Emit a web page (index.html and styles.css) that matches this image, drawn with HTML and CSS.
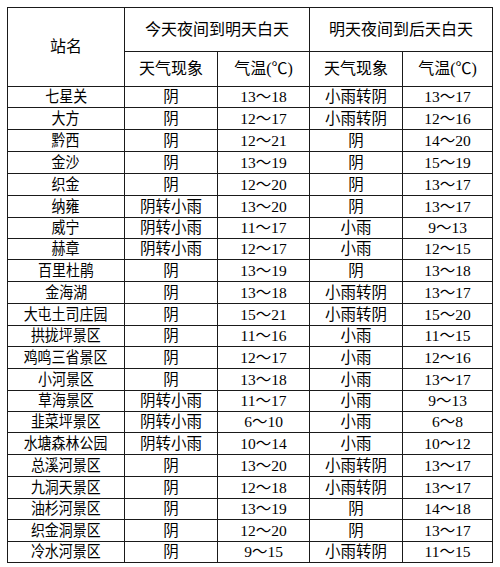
FILE: index.html
```html
<!DOCTYPE html>
<html lang="zh">
<head>
<meta charset="utf-8">
<link rel="stylesheet" href="styles.css">
</head>
<body>
<table class="wx">
  <colgroup>
    <col class="c1"><col class="c2"><col class="c3"><col class="c4"><col class="c5">
  </colgroup>
  <thead>
    <tr class="hr1"><th rowspan="2">站名</th><th colspan="2">今天夜间到明天白天</th><th colspan="2">明天夜间到后天白天</th></tr>
    <tr class="hr2"><th>天气现象</th><th>气温(℃)</th><th>天气现象</th><th>气温(℃)</th></tr>
  </thead>
  <tbody>
    <tr class="s"><td><span class="nm">七星关</span></td><td>阴</td><td>13～18</td><td>小雨转阴</td><td>13～17</td></tr>
    <tr class="l"><td><span class="nm">大方</span></td><td>阴</td><td>12～17</td><td>小雨转阴</td><td>12～16</td></tr>
    <tr class="l"><td><span class="nm">黔西</span></td><td>阴</td><td>12～21</td><td>阴</td><td>14～20</td></tr>
    <tr class="l"><td><span class="nm">金沙</span></td><td>阴</td><td>13～19</td><td>阴</td><td>15～19</td></tr>
    <tr class="l"><td><span class="nm">织金</span></td><td>阴</td><td>12～20</td><td>阴</td><td>13～17</td></tr>
    <tr class="l"><td><span class="nm">纳雍</span></td><td>阴转小雨</td><td>13～20</td><td>阴</td><td>13～17</td></tr>
    <tr class="s"><td><span class="nm">威宁</span></td><td>阴转小雨</td><td>11～17</td><td>小雨</td><td>9～13</td></tr>
    <tr class="s"><td><span class="nm">赫章</span></td><td>阴转小雨</td><td>12～17</td><td>小雨</td><td>12～15</td></tr>
    <tr class="l"><td><span class="nm">百里杜鹃</span></td><td>阴</td><td>13～19</td><td>阴</td><td>13～18</td></tr>
    <tr class="l"><td><span class="nm">金海湖</span></td><td>阴</td><td>13～18</td><td>小雨转阴</td><td>13～17</td></tr>
    <tr class="l"><td><span class="nm">大屯土司庄园</span></td><td>阴</td><td>15～21</td><td>小雨转阴</td><td>15～20</td></tr>
    <tr class="s"><td><span class="nm">拱拢坪景区</span></td><td>阴</td><td>11～16</td><td>小雨</td><td>11～15</td></tr>
    <tr class="l"><td><span class="nm">鸡鸣三省景区</span></td><td>阴</td><td>12～17</td><td>小雨</td><td>12～16</td></tr>
    <tr class="l"><td><span class="nm">小河景区</span></td><td>阴</td><td>13～18</td><td>小雨</td><td>13～17</td></tr>
    <tr class="s"><td><span class="nm">草海景区</span></td><td>阴转小雨</td><td>11～17</td><td>小雨</td><td>9～13</td></tr>
    <tr class="s"><td><span class="nm">韭菜坪景区</span></td><td>阴转小雨</td><td>6～10</td><td>小雨</td><td>6～8</td></tr>
    <tr class="l"><td><span class="nm">水塘森林公园</span></td><td>阴转小雨</td><td>10～14</td><td>小雨</td><td>10～12</td></tr>
    <tr class="l"><td><span class="nm">总溪河景区</span></td><td>阴</td><td>13～20</td><td>小雨转阴</td><td>13～17</td></tr>
    <tr class="l"><td><span class="nm">九洞天景区</span></td><td>阴</td><td>12～18</td><td>小雨转阴</td><td>13～17</td></tr>
    <tr class="s"><td><span class="nm">油杉河景区</span></td><td>阴</td><td>13～19</td><td>阴</td><td>14～18</td></tr>
    <tr class="l"><td><span class="nm">织金洞景区</span></td><td>阴</td><td>12～20</td><td>阴</td><td>13～17</td></tr>
    <tr class="s"><td><span class="nm">冷水河景区</span></td><td>阴</td><td>9～15</td><td>小雨转阴</td><td>11～15</td></tr>
  </tbody>
</table>
</body>
</html>
```
FILE: styles.css
```css
html, body {
  margin: 0;
  padding: 0;
  background: #ffffff;
}
body {
  padding: 7px 0 0 7px;
  font-family: "Liberation Serif", "Noto Sans CJK SC", sans-serif;
  color: #000000;
}
.wx {
  border-collapse: collapse;
  table-layout: fixed;
  width: 486px;
  font-size: 15.5px;
}
.c1 { width: 117px; }
.c2 { width: 93px; }
.c3 { width: 92px; }
.c4 { width: 93px; }
.c5 { width: 90px; }
.wx th, .wx td {
  border: 1px solid #1a1a1a;
  padding: 0;
  text-align: center;
  vertical-align: middle;
  font-weight: normal;
  line-height: 1;
  white-space: nowrap;
  overflow: hidden;
}
.wx th {
  font-size: 16px;
}
.nm {
  display: inline-block;
  transform: scaleX(0.9);
}
.hr1 { height: 44px; }
.hr2 { height: 35px; }
.l { height: 22px; }
.s { height: 21px; }
```
